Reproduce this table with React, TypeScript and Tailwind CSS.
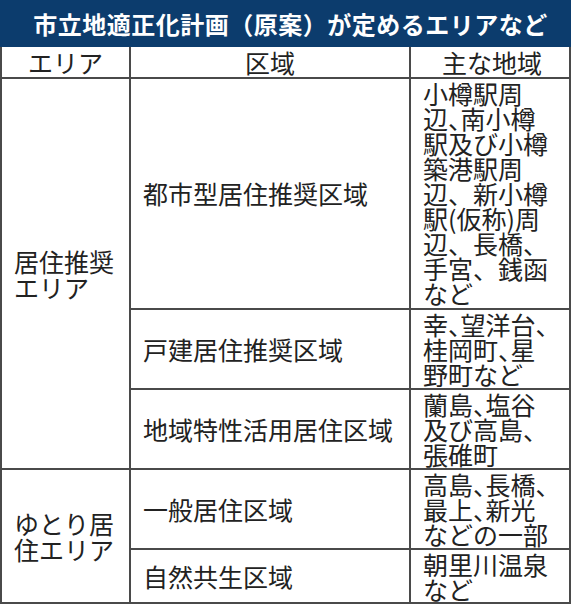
const FONT = "[font-family:'Noto_Sans_CJK_JP','Noto_Sans',sans-serif]";

type Line = { text: string; tight?: boolean };

const L = (text: string, tight = false): Line => ({ text, tight });

const rows: { zone: string; places: Line[] }[] = [
  {
    zone: "都市型居住推奨区域",
    places: [
      L("小樽駅周"),
      L("辺、南小樽", true),
      L("駅及び小樽"),
      L("築港駅周"),
      L("辺、新小樽"),
      L("駅(仮称)周"),
      L("辺、長橋、"),
      L("手宮、銭函"),
      L("など"),
    ],
  },
  {
    zone: "戸建居住推奨区域",
    places: [L("幸、望洋台、", true), L("桂岡町、星", true), L("野町など")],
  },
  {
    zone: "地域特性活用居住区域",
    places: [L("蘭島、塩谷", true), L("及び高島、"), L("張碓町")],
  },
  {
    zone: "一般居住区域",
    places: [L("高島、長橋、", true), L("最上、新光", true), L("などの一部")],
  },
  {
    zone: "自然共生区域",
    places: [L("朝里川温泉"), L("など")],
  },
];

const cell = "border-[#4a4a4a] border-b-2";

function Places({ lines }: { lines: Line[] }) {
  return (
    <div className="pl-[12px] pt-[2px] text-[25px] leading-[25px] whitespace-nowrap">
      {lines.map((l, i) => (
        <div key={i} className={l.tight ? "[font-feature-settings:'halt']" : ""}>
          {l.text}
        </div>
      ))}
    </div>
  );
}

export default function App() {
  return (
    <div className={`${FONT} w-[575px] h-[610px] bg-white text-[#222]`}>
      <div className="w-[571px]">
        {/* Title bar */}
        <div className="h-[47px] bg-[#0c3c6d] text-white font-bold text-[24px] flex items-center justify-center pl-[10px] tracking-[0.5px]">
          市立地適正化計画（原案）が定めるエリアなど
        </div>

        {/* Table */}
        <div className="grid grid-cols-[129px_280px_158px] grid-rows-[32px_231px_80px_80px_80px_54px] border-l-2 border-r-2 border-[#4a4a4a]">
          {/* Header */}
          <div className={`${cell} border-r-2 flex items-center justify-center text-[25px] leading-none`}>エリア</div>
          <div className={`${cell} border-r-2 flex items-center justify-center text-[25px] leading-none`}>区域</div>
          <div className={`${cell} flex items-center justify-center text-[25px] leading-none pl-[4px]`}>主な地域</div>

          {/* 居住推奨エリア */}
          <div className={`${cell} border-r-2 row-span-3 flex items-center pl-[12px] text-[25px] leading-[26px]`}>
            <div>
              居住推奨
              <br />
              エリア
            </div>
          </div>
          {rows.slice(0, 3).map((r) => (
            <Row key={r.zone} zone={r.zone} places={r.places} />
          ))}

          {/* ゆとり居住エリア */}
          <div className={`${cell} border-r-2 row-span-2 flex items-center pl-[12px] text-[25px] leading-[26px]`}>
            <div>
              ゆとり居
              <br />
              住エリア
            </div>
          </div>
          {rows.slice(3).map((r) => (
            <Row key={r.zone} zone={r.zone} places={r.places} />
          ))}
        </div>
      </div>
    </div>
  );
}

function Row({ zone, places }: { zone: string; places: Line[] }) {
  return (
    <>
      <div className={`${cell} border-r-2 flex items-center pl-[12px] text-[25px] leading-none whitespace-nowrap`}>
        {zone}
      </div>
      <div className={cell}>
        <Places lines={places} />
      </div>
    </>
  );
}
